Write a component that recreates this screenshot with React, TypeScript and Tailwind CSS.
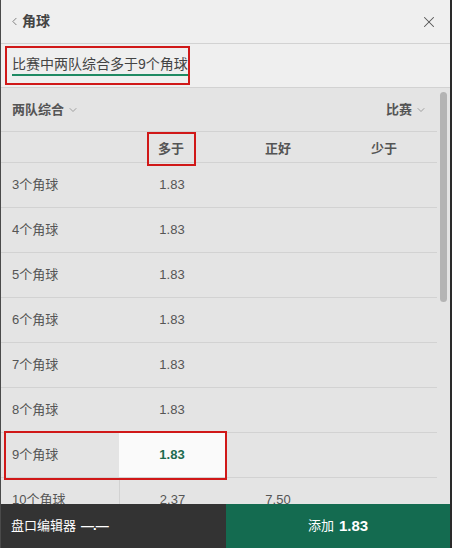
import { ChevronDown, ChevronLeft, X } from 'lucide-react'

const rows = [
  { label: '3个角球', over: '1.83' },
  { label: '4个角球', over: '1.83' },
  { label: '5个角球', over: '1.83' },
  { label: '6个角球', over: '1.83' },
  { label: '7个角球', over: '1.83' },
  { label: '8个角球', over: '1.83' },
]

export default function App() {
  return (
    <div className="flex h-[548px] w-[452px] flex-col overflow-hidden border-l border-r-2 border-l-[#4a4a4a] border-r-[#2a2a2a] bg-[#e4e4e4] font-['Liberation_Sans','Noto_Sans_CJK_SC',sans-serif] text-[13px] text-[#555]">
      <header className="flex h-[44px] shrink-0 items-center justify-between border-b border-[#d2d2d2] bg-[#efefef] pl-[7px] pr-[12px]">
        <div className="flex items-center gap-[1px]">
          <ChevronLeft className="h-[13px] w-[13px] text-[#666]" strokeWidth={1.5} />
          <span className="text-[14px] font-bold text-[#444]">角球</span>
        </div>
        <X className="h-[18px] w-[18px] text-[#555]" strokeWidth={1.4} />
      </header>

      <div className="flex h-[44px] shrink-0 items-center border-b border-[#d2d2d2] bg-[#efefef] pl-[4px]">
        <div className="flex h-[39px] w-[185px] items-center border-2 border-[#d01818] pl-[5px]">
          <span className="border-b-2 border-[#1f8a63] pb-[1px] text-[14px] leading-[18px] text-[#444]">比赛中两队综合多于9个角球</span>
        </div>
      </div>

      <div className="relative flex-1 overflow-hidden">
        <div className="w-[436px]">
          <div className="flex h-[44px] items-center justify-between border-b border-[#d2d2d2] pl-[11px] pr-[10px]">
            <div className="flex items-center gap-[3px] font-bold text-[#555]">
              两队综合
              <ChevronDown className="h-[12px] w-[12px] text-[#888]" strokeWidth={1.5} />
            </div>
            <div className="flex items-center gap-[3px] font-bold text-[#555]">
              比赛
              <ChevronDown className="h-[12px] w-[12px] text-[#888]" strokeWidth={1.5} />
            </div>
          </div>

          <div className="grid h-[30px] grid-cols-[118px_106px_106px_106px] items-center font-bold text-[#555]">
            <div />
            <div className="flex justify-center">
              <span className="-ml-[2px] flex h-[34px] w-[49px] items-center justify-center border-2 border-[#d01818]">多于</span>
            </div>
            <div className="text-center">正好</div>
            <div className="text-center">少于</div>
          </div>

          {rows.map((row) => (
            <div key={row.label} className="grid h-[45px] grid-cols-[118px_106px_106px_106px] items-center border-t border-[#d2d2d2]">
              <div className="pl-[11px]">{row.label}</div>
              <div className="text-center">{row.over}</div>
              <div />
              <div />
            </div>
          ))}

          <div className="relative grid h-[45px] grid-cols-[118px_106px_106px_106px] border-t border-[#d2d2d2]">
            <div className="flex items-center pl-[11px]">9个角球</div>
            <div className="flex items-center justify-center bg-[#fafafa] font-bold text-[#1d6b4f]">1.83</div>
            <div />
            <div />
            <div className="absolute left-[3px] top-[-2px] h-[49px] w-[223px] border-2 border-[#d01818]" />
          </div>

          <div className="grid h-[45px] grid-cols-[118px_106px_106px_106px] items-center border-t border-[#d2d2d2]">
            <div className="pl-[11px]">10个角球</div>
            <div className="flex h-full items-center justify-center border-l border-[#d2d2d2]">2.37</div>
            <div className="text-center">7.50</div>
            <div />
          </div>
        </div>

        <div className="absolute right-[3px] top-[4px] h-[210px] w-[7px] rounded-full bg-[#b4b4b4]" />
      </div>

      <footer className="grid h-[44px] shrink-0 grid-cols-[225px_1fr]">
        <div className="flex items-center gap-[5px] bg-[#333] pl-[10px] text-[13px] text-white">
          盘口编辑器
          <span className="font-bold tracking-[-1px]">—.—</span>
        </div>
        <div className="flex items-center justify-center gap-[5px] bg-[#146b50] text-white">
          <span className="text-[13px]">添加</span>
          <span className="text-[15px] font-bold">1.83</span>
        </div>
      </footer>
    </div>
  )
}
